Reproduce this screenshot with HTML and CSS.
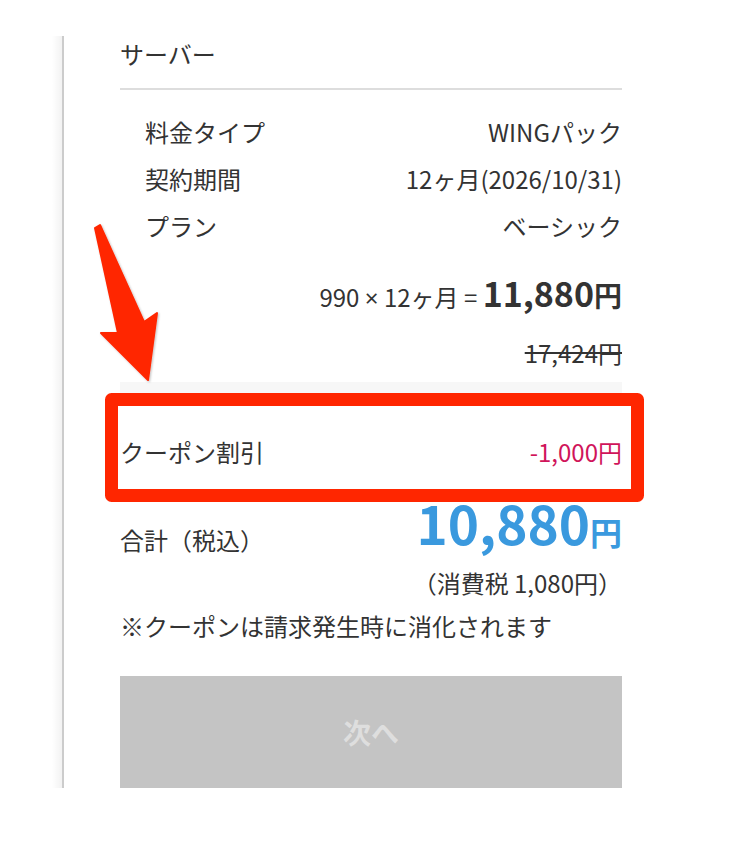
FILE: index.html
```html
<!DOCTYPE html>
<html lang="ja">
<head>
    <meta charset="UTF-8">
    <meta name="viewport" content="width=device-width, initial-scale=1.0">
    <title>お申し込み内容</title>
    <link rel="stylesheet" href="styles.css">
</head>
<body>
    <div class="page">
        <div class="panel">
            <h2 class="panel-head">サーバー</h2>

            <div class="detail-rows">
                <div class="detail-row"><span>料金タイプ</span><span>WINGパック</span></div>
                <div class="detail-row"><span>契約期間</span><span>12ヶ月(2026/10/31)</span></div>
                <div class="detail-row"><span>プラン</span><span>ベーシック</span></div>
            </div>

            <p class="calc">990 <span class="times">×</span> 12ヶ月 = <strong class="calc-sum">11,880<small>円</small></strong></p>
            <p class="strike"><s>17,424円</s></p>

            <div class="band"></div>

            <div class="coupon">
                <span>クーポン割引</span>
                <span class="coupon-value">-1,000円</span>
            </div>

            <div class="total">
                <span class="total-label">合計（税込）</span>
                <strong class="total-sum">10,880<small>円</small></strong>
            </div>
            <p class="tax">（消費税 1,080円）</p>
            <p class="note">※クーポンは請求発生時に消化されます</p>

            <button type="button" class="next-btn" disabled>次へ</button>
        </div>
    </div>

    <!-- annotation: arrow + box over the coupon row -->
    <svg class="markup" width="736" height="854" viewBox="0 0 736 854">
        <defs>
            <filter id="shade" x="-20%" y="-20%" width="140%" height="140%">
                <feDropShadow dx="1" dy="1" stdDeviation="1.2" flood-color="#000" flood-opacity="0.25"/>
            </filter>
        </defs>
        <polygon filter="url(#shade)" fill="#ff2600" stroke="#ff2600" stroke-width="2" stroke-linejoin="round"
                 points="95,228 100,225 144,322 157,313 148,380 101,333 118,333"/>
        <rect x="111.5" y="399.5" width="526" height="96" fill="none" stroke="#ff2600" stroke-width="13" stroke-linejoin="round"/>
    </svg>
</body>
</html>
```

FILE: styles.css
```css
body {
    margin: 0;
    background-color: #fff;
    color: #333;
    font-family: "Noto Sans CJK JP", "Noto Sans", sans-serif;
}
p, h2 {
    margin: 0;
}
.page {
    margin: 36px 0 0 52px;
    padding-left: 10px;
    /* faint shade left of the panel edge */
    background: linear-gradient(to right, rgba(0, 0, 0, 0), rgba(0, 0, 0, 0.05)) no-repeat left top / 10px 100%;
}
.panel {
    width: 502px;
    padding-left: 56px;
    border-left: 2px solid #ccc;
    background-color: #fff;
}
.panel-head {
    font-size: 24px;
    font-weight: normal;
    line-height: 36px;
    padding-bottom: 16px;
    border-bottom: 2px solid #ddd;
}
.detail-rows {
    margin-top: 18px;
    padding-left: 25px;
}
.detail-row {
    display: flex;
    justify-content: space-between;
    font-size: 24px;
    line-height: 47px;
}
.calc {
    margin-top: 24px;
    height: 48px;
    text-align: right;
    font-size: 24px;
    line-height: 48px;
}
.calc .times {
    font-family: "Noto Sans", sans-serif;
}
.calc-sum {
    font-size: 34px;
    line-height: 1;
    font-weight: bold;
}
.calc-sum small {
    font-size: 28px;
}
.strike {
    margin-top: 16px;
    text-align: right;
    font-size: 24px;
    line-height: 32px;
}
.band {
    margin-top: 13px;
    height: 12px;
    background-color: #f7f7f7;
}
.coupon {
    display: flex;
    justify-content: space-between;
    padding: 40px 0 20px;
    font-size: 24px;
    line-height: 36px;
}
.coupon-value {
    color: #d0145a;
}
.total {
    display: flex;
    justify-content: space-between;
    align-items: flex-start;
}
.total-label {
    margin-top: 32px;
    font-size: 24px;
    line-height: 36px;
}
.total-sum {
    margin-top: 5px;
    color: #3a99de;
    font-size: 53px;
    line-height: 55px;
    font-weight: bold;
}
.total-sum small {
    font-size: 32px;
}
.tax {
    margin-top: 6px;
    text-align: right;
    font-size: 24px;
    line-height: 36px;
}
.note {
    margin-top: 7px;
    font-size: 24px;
    line-height: 36px;
}
.next-btn {
    display: block;
    width: 100%;
    height: 112px;
    margin-top: 32px;
    border: none;
    border-radius: 0;
    background-color: #c4c4c4;
    color: #dedede;
    font-family: inherit;
    font-size: 28px;
    font-weight: bold;
}
.markup {
    position: absolute;
    top: 0;
    left: 0;
    pointer-events: none;
}
```
